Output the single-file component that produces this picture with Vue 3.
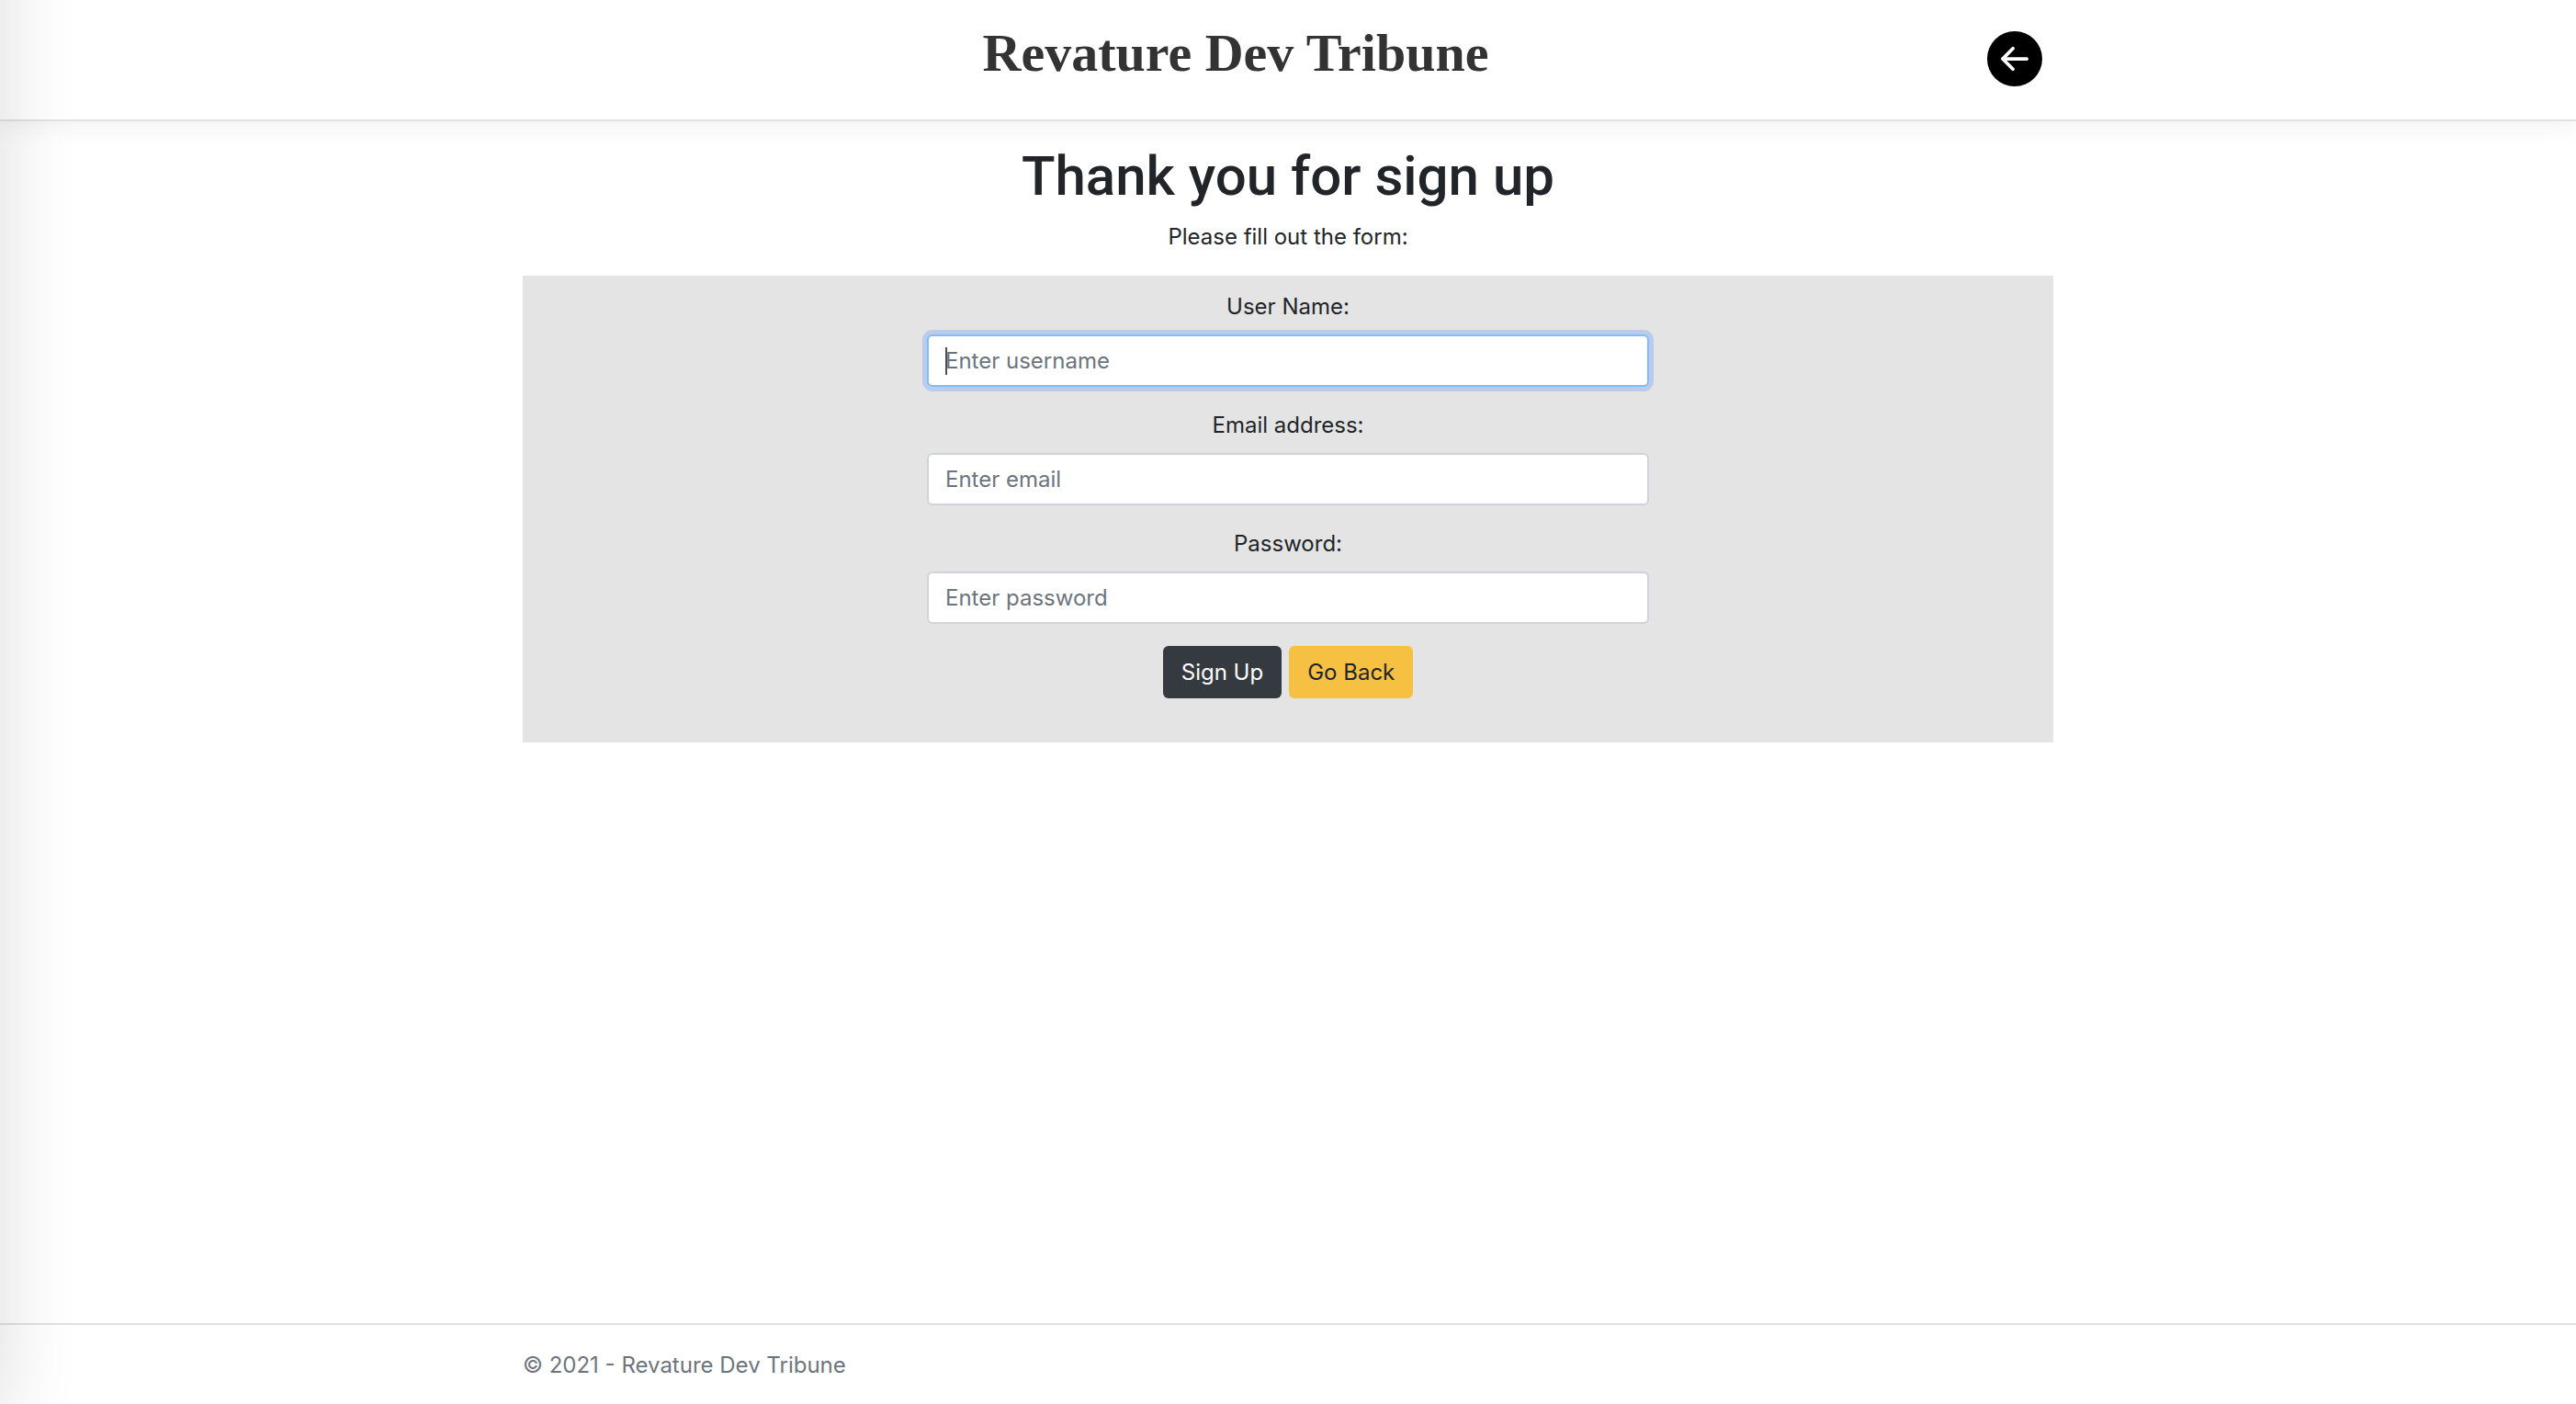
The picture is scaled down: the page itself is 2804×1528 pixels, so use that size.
<script setup>
import { onMounted, ref } from 'vue'

const form = ref({ username: '', email: '', password: '' })
const usernameInput = ref(null)

onMounted(() => usernameInput.value.focus())
</script>

<template>
  <div class="page">
    <header class="site-header">
      <div class="container header-row">
        <a class="brand" href="#">Revature Dev Tribune</a>
        <a class="back-link" href="#" aria-label="Back">
          <svg viewBox="0 0 16 16" fill="currentColor" aria-hidden="true">
            <path d="M8 0a8 8 0 1 0 0 16A8 8 0 0 0 8 0zm3.500 7.500a.5.5 0 0 1 0 1H5.707l2.147 2.146a.5.5 0 0 1-.708.708l-3-3a.5.5 0 0 1 0-.708l3-3a.5.5 0 1 1 .708.708L5.707 7.500H11.500z" />
          </svg>
        </a>
      </div>
    </header>

    <main class="container content">
      <h1>Thank you for sign up</h1>
      <p class="intro">Please fill out the form:</p>

      <form class="panel" @submit.prevent>
        <div class="field">
          <label for="username">User Name:</label>
          <div class="control">
            <input id="username" ref="usernameInput" v-model="form.username" type="text" placeholder="Enter username" />
            <span class="caret" aria-hidden="true"></span>
          </div>
        </div>
        <div class="field">
          <label for="email">Email address:</label>
          <input id="email" v-model="form.email" type="email" placeholder="Enter email" />
        </div>
        <div class="field">
          <label for="password">Password:</label>
          <input id="password" v-model="form.password" type="password" placeholder="Enter password" />
        </div>
        <div class="actions">
          <button class="btn btn-dark" type="submit">Sign Up</button>
          <button class="btn btn-warning" type="button">Go Back</button>
        </div>
      </form>
    </main>

    <footer class="site-footer">
      <div class="container">© 2021 - Revature Dev Tribune</div>
    </footer>

    <div class="drawer-shadow" aria-hidden="true"></div>
  </div>
</template>

<style>
body {
  margin: 0;
  background: #fff;
}
</style>

<style scoped>
.page {
  display: flex;
  flex-direction: column;
  min-height: 100vh;
  overflow-x: hidden;
  color: #212529;
  font-family: Inter, "Liberation Sans", sans-serif;
  font-size: 24px;
  line-height: 36px;
}

.page *,
.page {
  box-sizing: border-box;
}

.container {
  width: calc(100% - 48px);
  max-width: 1666px;
  margin: 0 auto;
}

.site-header {
  border-bottom: 2px solid #dee2e6;
  box-shadow: 0 8px 24px rgba(0, 0, 0, 0.05);
}

.header-row {
  display: grid;
  grid-template-columns: 1fr auto 1fr;
  align-items: center;
  height: 130px;
  padding: 0 12px 2px;
}

.brand {
  grid-column: 2;
  margin-right: 114px;
  padding-bottom: 12px;
  color: #333;
  font-family: "Old English Text MT", "Liberation Serif", serif;
  font-size: 58px;
  font-weight: 700;
  line-height: 64px;
  text-decoration: none;
  white-space: nowrap;
}

.back-link {
  justify-self: end;
  width: 60px;
  height: 60px;
  color: #000;
}

.back-link svg {
  display: block;
  width: 100%;
  height: 100%;
}

.content {
  flex: 1;
  padding-top: 24px;
  text-align: center;
}

h1 {
  margin: 0 0 12px;
  font-family: Roboto, Inter, sans-serif;
  font-size: 60px;
  font-weight: 500;
  line-height: 72px;
}

.intro {
  margin: 0 0 24px;
}

.panel {
  display: flex;
  flex-direction: column;
  align-items: center;
  gap: 24px;
  padding: 16px 24px 48px;
  background: #e4e4e4;
}

.field {
  display: flex;
  flex-direction: column;
  gap: 12px;
  width: 100%;
  max-width: 786px;
}

.control {
  position: relative;
  display: flex;
}

input {
  width: 100%;
  height: 57px;
  padding: 0 18px;
  border: 2px solid #ced4da;
  border-radius: 6px;
  background: #fff;
  color: #495057;
  font: inherit;
}

input::placeholder {
  color: #6c757d;
  opacity: 1;
}

input:focus {
  border-color: #80bdff;
  outline: 0;
  box-shadow: 0 0 0 5px rgba(60, 130, 246, 0.25);
}

/* Steady caret for the empty, focused field */
.caret {
  position: absolute;
  top: 14px;
  left: 20px;
  display: none;
  width: 2px;
  height: 30px;
  background: #495057;
  pointer-events: none;
}

input:focus:placeholder-shown {
  caret-color: transparent;
}

input:focus:placeholder-shown + .caret {
  display: block;
}

.actions {
  display: flex;
  gap: 8px;
}

.btn {
  height: 57px;
  padding: 0 20px;
  border: 0;
  border-radius: 6px;
  font: inherit;
}

.btn-dark {
  background: #343a40;
  color: #fff;
}

.btn-warning {
  background: #f6c143;
  color: #212529;
}

.site-footer {
  padding: 26px 0 24px;
  border-top: 2px solid #dee2e6;
  color: #6c757d;
}

.drawer-shadow {
  position: fixed;
  top: -100px;
  bottom: -20px;
  left: -200px;
  width: 200px;
  box-shadow: 0 0 88px rgba(0, 0, 0, 0.14);
  pointer-events: none;
}
</style>
